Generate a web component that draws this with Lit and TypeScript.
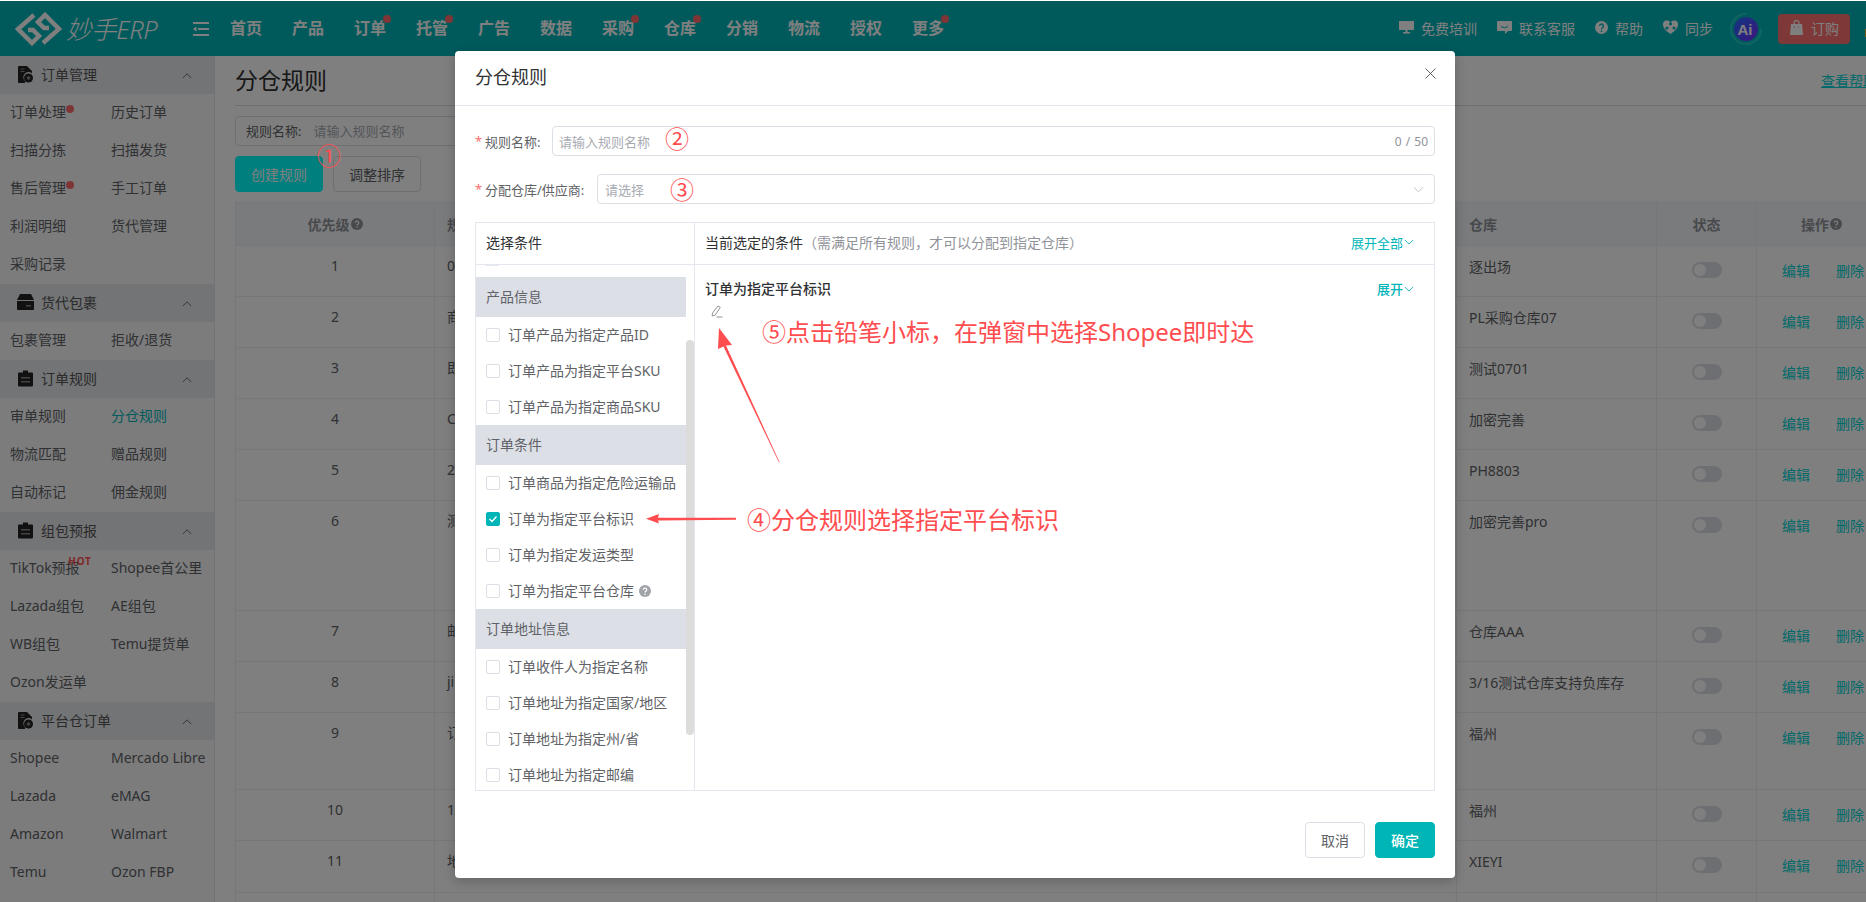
import { LitElement, html, css, svg } from "lit";
import { customElement } from "lit/decorators.js";

const fileGear = html`<svg class="sec-ico" viewBox="0 0 15 17"><path fill="#222" d="M1 0h8l5 5v2.500a5 5 0 0 0-7 7.500V17H1a1 1 0 0 1-1-1V1a1 1 0 0 1 1-1z"/><path fill="#888" d="M2.500 2.500h4v1h-4zM2.500 5h4v1h-4z"/><circle cx="10.500" cy="12" r="4.500" fill="#222"/><circle cx="10.500" cy="12" r="1.800" fill="#888"/></svg>`;
const box = html`<svg class="sec-ico box" viewBox="0 0 17 16"><path fill="#222" d="M3 0h11l3 6H0zM0 7h17v8a1 1 0 0 1-1 1H1a1 1 0 0 1-1-1z"/><path fill="#888" d="M9 11h5v1.500H9z"/></svg>`;
const clip = html`<svg class="sec-ico" viewBox="0 0 15 16"><path fill="#222" d="M5 0h5v2h4a1 1 0 0 1 1 1v12a1 1 0 0 1-1 1H1a1 1 0 0 1-1-1V3a1 1 0 0 1 1-1h4z"/><path fill="#888" d="M3 6.500h9V8H3zM3 10.500h9V12H3z"/></svg>`;

const chevUp = html`<svg class="chev-up" viewBox="0 0 12 8"><path d="M1 7l5-5 5 5" fill="none" stroke="#555" stroke-width="1"/></svg>`;
const chevDown = (c: string) => html`<svg class="chev-dn" viewBox="0 0 12 7"><path d="M1 1l5 5 5-5" fill="none" stroke="${c}" stroke-width="1"/></svg>`;
const qmark = html`<svg class="q" viewBox="0 0 12 12"><circle cx="6" cy="6" r="6" fill="currentColor"/><path d="M4.300 4.700a1.700 1.700 0 1 1 2.600 1.500c-.6.400-.9.700-.9 1.300" fill="none" stroke="#fff" stroke-width="1.200"/><circle cx="6" cy="9.300" r=".8" fill="#fff"/></svg>`;

type Sec = { icon: unknown; title: string; items: [string, string?][]; };
const sections: Sec[] = [
  { icon: fileGear, title: "订单管理", items: [["订单处理*", "历史订单"], ["扫描分拣", "扫描发货"], ["售后管理*", "手工订单"], ["利润明细", "货代管理"], ["采购记录"]] },
  { icon: box, title: "货代包裹", items: [["包裹管理", "拒收/退货"]] },
  { icon: clip, title: "订单规则", items: [["审单规则", "分仓规则"], ["物流匹配", "赠品规则"], ["自动标记", "佣金规则"]] },
  { icon: clip, title: "组包预报", items: [["TikTok预报#", "Shopee首公里"], ["Lazada组包", "AE组包"], ["WB组包", "Temu提货单"], ["Ozon发运单"]] },
  { icon: fileGear, title: "平台仓订单", items: [["Shopee", "Mercado Libre"], ["Lazada", "eMAG"], ["Amazon", "Walmart"], ["Temu", "Ozon FBP"]] },
];

const nav: [string, boolean][] = [["首页", false], ["产品", false], ["订单", true], ["托管", true], ["广告", false], ["数据", false], ["采购", true], ["仓库", true], ["分销", false], ["物流", false], ["授权", false], ["更多", true]];

const rows: [string, string, string, number][] = [
  ["1", "0701规则", "逐出场", 51], ["2", "商品规则", "PL采购仓库07", 51], ["3", "即时规则", "测试0701", 51], ["4", "CN规则", "加密完善", 51],
  ["5", "2024规则", "PH8803", 51], ["6", "测试规则", "加密完善pro", 110], ["7", "邮编规则", "仓库AAA", 51], ["8", "jin规则", "3/16测试仓库支持负库存", 51],
  ["9", "订单规则", "福州", 77], ["10", "1号规则", "福州", 51], ["11", "地址规则", "XIEYI", 52], ["", "", "", 51],
];

const groups: [string, [string, boolean?, boolean?][]][] = [
  ["产品信息", [["订单产品为指定产品ID"], ["订单产品为指定平台SKU"], ["订单产品为指定商品SKU"]]],
  ["订单条件", [["订单商品为指定危险运输品"], ["订单为指定平台标识", true], ["订单为指定发运类型"], ["订单为指定平台仓库", false, true]]],
  ["订单地址信息", [["订单收件人为指定名称"], ["订单地址为指定国家/地区"], ["订单地址为指定州/省"], ["订单地址为指定邮编"]]],
];

@customElement("app-root")
export class AppRoot extends LitElement {
  static styles = css`
    :host { display: block; position: relative; width: 1866px; height: 902px; overflow: hidden; background: #fff;
      font-family: "Noto Sans", "Noto Sans CJK SC", sans-serif; font-size: 14px; color: #606266; }
    * { box-sizing: border-box; }
    .topline { height: 1px; background: #fff; }
    .hdr { height: 55px; background: #00b5b8; color: #fff; display: flex; align-items: center; position: relative; }
    .logo { width: 193px; padding-left: 15px; display: flex; align-items: center; gap: 4px; flex: none; }
    .logo svg { width: 47px; height: 34px; flex: none; }
    .logo span { font-size: 25.500px; font-style: italic; font-weight: 300; letter-spacing: -.4px; white-space: nowrap; line-height: 34px; }
    .burger { width: 16px; height: 14px; flex: none; }
    .nav { display: flex; gap: 30px; margin-left: 21px; font-size: 16px; font-weight: 700; padding-bottom: 4px; }
    .nav span { position: relative; display: block; width: 32px; white-space: nowrap; }
    .dot { position: absolute; width: 8px; height: 8px; border-radius: 50%; background: #ff6b6b; }
    .nav .dot { right: -5px; top: 0; }
    .tools { margin-left: auto; display: flex; align-items: center; margin-right: 16px; }
    .tool { display: flex; align-items: center; gap: 7px; margin-right: 20px; white-space: nowrap; padding-bottom: 2px; }
    .tool svg { width: 15px; height: 15px; flex: none; }
    .ai { width: 32px; height: 32px; margin-right: 16px; flex: none; margin-left: 0; }
    .buy { width: 72px; height: 30px; background: #ff7070; border-radius: 4px; display: flex; align-items: center; gap: 8px; padding: 0 0 2px 12px; }
    .buy svg { width: 13px; height: 15px; }
    .edge { position: absolute; right: 0; top: 28px; width: 1px; height: 8px; background: #ffb020; }

    .page { display: flex; height: 846px; }
    .side { width: 215px; flex: none; background: #f9f9fa; border-right: 1px solid #e4e7ed; overflow: hidden; }
    .sec-h { height: 38px; background: #e6e8eb; display: flex; align-items: center; color: #555; position: relative; padding: 0 0 2px 18px; }
    .sec-ico { width: 15px; height: 17px; flex: none; margin-right: 8px; }
    .sec-ico.box { width: 17px; height: 16px; margin-left: -1px; margin-right: 7px; }
    .chev-up { width: 10px; height: 7px; margin-left: auto; margin-right: 22px; margin-top: 2px; }
    .side-row { height: 38px; display: grid; grid-template-columns: 101px 1fr; padding: 0 0 4px 10px; align-items: center; color: #606266; }
    .side-row div { white-space: nowrap; position: relative; }
    .side-row .active { color: #00b5b8; }
    .inl { position: relative; display: inline-block; }
    .inl .dot { right: -8px; top: 4px; }
    .hot { position: absolute; right: -12px; top: -1px; color: #ff5050; font-size: 10px; font-weight: 700; letter-spacing: .8px; line-height: 10px; }

    .main { flex: 1; padding-left: 20px; overflow: hidden; }
    .inner { width: 1651px; }
    .title { height: 50px; border-bottom: 1px solid #dcdfe6; display: flex; justify-content: space-between; align-items: center; padding: 0 9px 2px 0; }
    .title h1 { margin: 0; font-size: 23px; font-weight: 400; color: #303133; line-height: 30px; }
    .title a { color: #00d4d4; text-decoration: underline; white-space: nowrap; }
    .search { margin-top: 10px; height: 30px; width: 500px; border: 1px solid #dcdfe6; border-radius: 4px; display: flex; align-items: center; padding: 0 0 1px 10px; gap: 12px; font-size: 13px; }
    .search i { font-style: normal; color: #a8abb2; }
    .btns { display: flex; gap: 10px; margin-top: 10px; }
    .btn { width: 88px; height: 36px; border-radius: 4px; border: 1px solid #dcdfe6; display: flex; align-items: center; justify-content: center; }
    .btn.pri { background: #00ffff; color: #fff; border-color: #00ffff; }
    .tbl { margin-top: 10px; display: grid; grid-template-columns: 199px 1022px 200px 100px 130px; border-top: 1px solid #ebeef5; border-left: 1px solid #ebeef5; }
    .th { height: 43px; background: #f5f7fa; font-weight: 700; color: #909399; display: flex; align-items: center; justify-content: center; gap: 1px; border-right: 1px solid #ebeef5; border-bottom: 1px solid #ebeef5; padding-bottom: 1px; }
    .th.l { justify-content: flex-start; padding-left: 12px; }
    .q { width: 12px; height: 12px; flex: none; }
    .td { border-right: 1px solid #ebeef5; border-bottom: 1px solid #ebeef5; padding-top: 10px; line-height: 20px; color: #606266; white-space: nowrap; overflow: hidden; }
    .td.c { text-align: center; }
    .td.l { padding-left: 12px; }
    .td.wh { padding-top: 11px; }
    .sw { margin: 6px auto 0; width: 30px; height: 16px; border-radius: 8px; background: #dcdfe6; padding: 2px; }
    .sw b { display: block; width: 12px; height: 12px; border-radius: 50%; background: #fff; }
    .ops { display: flex; gap: 26px; padding: 5px 0 0 25px; color: #00d4d4; }

    .mask { position: absolute; inset: 1px 0 0 0; background: rgba(0,0,0,.5); }
    .dlg { position: absolute; left: 455px; top: 51px; width: 1000px; height: 827px; background: #fff; border-radius: 4px; box-shadow: 0 3px 12px rgba(0,0,0,.22); display: flex; flex-direction: column; }
    .dlg-h { height: 55px; flex: none; border-bottom: 1px solid #e4e7ed; display: flex; align-items: center; justify-content: space-between; padding: 0 19px 4px 20px; font-size: 18px; color: #303133; }
    .dlg-h svg { width: 11px; height: 11px; margin-top: -6px; }
    .dlg-b { padding: 20px 20px 0 20px; flex: 1; display: flex; flex-direction: column; gap: 18px; }
    .frow { display: flex; align-items: center; height: 30px; font-size: 13px; }
    .lab { flex: none; white-space: nowrap; display: flex; }
    .lab i { font-style: normal; color: #f56c6c; width: 10px; }
    .inp { flex: 1; height: 30px; border: 1px solid #dcdfe6; border-radius: 4px; display: flex; align-items: center; justify-content: space-between; padding: 0 6px; color: #a8abb2; }
    .inp .ph { color: #a8abb2; }
    .inp small { font-size: 12px; color: #909399; word-spacing: 1px; }
    .inp .chev-dn { width: 11px; height: 7px; margin-right: 4px; }
    .panel { height: 569px; border: 1px solid #e4e7ed; display: grid; grid-template-columns: 219px 1fr; }
    .left { border-right: 1px solid #e4e7ed; display: flex; flex-direction: column; min-height: 0; }
    .p-h { height: 42px; flex: none; border-bottom: 1px solid #e4e7ed; display: flex; align-items: center; color: #303133; padding: 0 0 3px 10px; }
    .list { position: relative; flex: 1; overflow: hidden; }
    .peek { width: 13px; height: 1px; background: #e4e7ed; margin: 0 0 11px 10px; }
    .grp { width: 210px; height: 40px; background: #dcdfe6; display: flex; align-items: center; padding: 0 0 2px 10px; color: #606266; }
    .it { height: 36px; display: flex; align-items: center; padding-left: 10px; white-space: nowrap; }
    .it span.t { padding-bottom: 2px; }
    .cb { width: 14px; height: 14px; border: 1px solid #dcdfe6; border-radius: 2px; margin-right: 8px; flex: none; background: #fff; }
    .cb.on { background: #00b5b8; border-color: #00b5b8; display: flex; }
    .cb svg { width: 12px; height: 12px; }
    .it .q { color: #a0a3a8; margin-left: 5px; }
    .bar { position: absolute; right: 0; top: 75px; width: 8px; height: 395px; background: #dcdcdc; border-radius: 4px; }
    .right { display: flex; flex-direction: column; min-height: 0; }
    .right .p-h { padding-right: 20px; justify-content: space-between; }
    .right .p-h em { font-style: normal; color: #909399; }
    .tog { color: #00b5b8; font-size: 13px; display: flex; align-items: center; gap: 1px; white-space: nowrap; }
    .chev-dn { width: 10px; height: 6px; }
    .cond { padding: 13px 20px 0 10px; }
    .cond-h { display: flex; justify-content: space-between; align-items: center; font-weight: 500; color: #303133; font-size: 14px; line-height: 22px; }
    .cond svg.pen { display: block; width: 13px; height: 13px; margin: 5px 0 0 5px; }
    .dlg-f { display: flex; justify-content: flex-end; gap: 10px; padding: 0 20px 20px; flex: none; }
    .dbtn { width: 60px; height: 36px; border-radius: 4px; border: 1px solid #dcdfe6; display: flex; align-items: center; justify-content: center; font-size: 14px; padding-bottom: 1px; }
    .dbtn.ok { background: #00b5b5; color: #fff; border-color: #00b5b5; font-weight: 500; }

    .note { position: absolute; color: #ff4d4f; line-height: 1; white-space: nowrap; font-family: "Noto Sans", "Noto Sans CJK SC", sans-serif; font-size: 24px; }
    .note.num { font-family: "Noto Sans CJK SC", sans-serif; }
    .arrows { position: absolute; inset: 0; width: 1866px; height: 902px; pointer-events: none; }
  `;

  private sideCell(t: string | undefined, active: boolean) {
    if (!t) return html`<div></div>`;
    const mark = t.endsWith("*") ? "dot" : t.endsWith("#") ? "hot" : "";
    const label = mark ? t.slice(0, -1) : t;
    return html`<div class=${active ? "active" : ""}><span class="inl">${label}${mark === "dot" ? html`<span class="dot"></span>` : ""}${mark === "hot" ? html`<span class="hot">HOT</span>` : ""}</span></div>`;
  }

  private renderHeader() {
    return html`<div class="topline"></div>
    <div class="hdr">
      <div class="logo">
        <svg viewBox="0 0 47 34"><g fill="none" stroke="#fff" stroke-width="4.500"><path d="M19 3 L3 17 L17 31 L24 24 L18 18 L13 18"/><path d="M28 31 L44 17 L30 3 L23 10 L29 16 L34 16"/></g></svg>
        <span>妙手ERP</span>
      </div>
      <svg class="burger" viewBox="0 0 16 14"><path fill="#fff" d="M0 0h16v2H0zM5 6h11v2H5zM0 12h16v2H0zM0 7l3.500-2.500v5z"/></svg>
      <div class="nav">${nav.map(([t, d]) => html`<span>${t}${d ? html`<i class="dot"></i>` : ""}</span>`)}</div>
      <div class="tools">
        <div class="tool"><svg viewBox="0 0 15 15"><path fill="#fff" d="M0 1h15v9H8.500v2H11v1.500H4V12h2.500v-2H0zM2 4h6v1.200H2z"/></svg>免费培训</div>
        <div class="tool"><svg viewBox="0 0 15 15"><path fill="#fff" d="M1 1h13a1 1 0 0 1 1 1v8a1 1 0 0 1-1 1h-3l-3 3v-3H1a1 1 0 0 1-1-1V2a1 1 0 0 1 1-1z"/><path d="M4 6.500q3.500 2.500 7 0" stroke="#00b5b8" fill="none"/></svg>联系客服</div>
        <div class="tool"><svg viewBox="0 0 12 12" style="width:13px;height:13px">${svg`<circle cx="6" cy="6" r="6" fill="#fff"/><path d="M4.200 4.700a1.800 1.800 0 1 1 2.700 1.500c-.6.400-.9.700-.9 1.300" fill="none" stroke="#00b5b8" stroke-width="1.300"/><circle cx="6" cy="9.300" r=".8" fill="#00b5b8"/>`}</svg>帮助</div>
        <div class="tool" style="margin-right:17px"><svg viewBox="0 0 15 15"><path fill="#fff" d="M7.500 14C3 11 0 8 0 4.500A4 4 0 0 1 7.500 2.500 4 4 0 0 1 15 4.500C15 8 12 11 7.500 14z"/><circle cx="7.500" cy="3.800" r="1.600" fill="#00b5b8"/><circle cx="4" cy="8" r="1.600" fill="#00b5b8"/><circle cx="11" cy="8" r="1.600" fill="#00b5b8"/></svg>同步</div>
        <svg class="ai" viewBox="0 0 32 32"><defs><linearGradient id="aig" x1="0" y1="0" x2="1" y2="1"><stop offset="0" stop-color="#1f6fff"/><stop offset="1" stop-color="#7a2bff"/></linearGradient></defs><circle cx="16" cy="16" r="15" fill="none" stroke="#2fd0c8" stroke-width="2" stroke-dasharray="70 24" opacity=".75"/><circle cx="16" cy="16" r="12" fill="url(#aig)"/><text x="15" y="21.500" text-anchor="middle" font-size="15" font-weight="700" fill="#fff" font-family="Liberation Sans">Ai</text></svg>
        <div class="buy"><svg viewBox="0 0 13 15"><path fill="#fff" d="M1 4h11l1 11H0z"/><path d="M4 6V3a2.500 2.500 0 0 1 5 0v3" fill="none" stroke="#fff" stroke-width="1.200"/><path d="M3.800 6.500h1.200v1H3.800zM8 6.500h1.200v1H8z" fill="#ff7070"/></svg>订购</div>
      </div>
      <span class="edge"></span>
    </div>`;
  }

  private renderSide() {
    return html`<aside class="side">
      ${sections.map((s) => html`
        <div class="sec-h">${s.icon}${s.title}${chevUp}</div>
        ${s.items.map(([a, b]) => html`<div class="side-row">${this.sideCell(a, false)}${this.sideCell(b, b === "分仓规则")}</div>`)}
      `)}
    </aside>`;
  }

  private renderMain() {
    return html`<main class="main"><div class="inner">
      <div class="title"><h1>分仓规则</h1><a>查看帮助</a></div>
      <div class="search"><span>规则名称:</span><i>请输入规则名称</i></div>
      <div class="btns"><div class="btn pri">创建规则</div><div class="btn">调整排序</div></div>
      <div class="tbl">
        <div class="th">优先级${qmark}</div><div class="th l">规则名称</div><div class="th l">仓库</div><div class="th">状态</div><div class="th">操作${qmark}</div>
        ${rows.map(([n, name, wh, h]) => html`
          <div class="td c" style="height:${h}px">${n}</div>
          <div class="td l" style="height:${h}px">${name}</div>
          <div class="td l wh" style="height:${h}px">${wh}</div>
          <div class="td" style="height:${h}px">${n ? html`<div class="sw"><b></b></div>` : ""}</div>
          <div class="td" style="height:${h}px">${n ? html`<div class="ops"><span>编辑</span><span>删除</span></div>` : ""}</div>
        `)}
      </div>
    </div></main>`;
  }

  private renderDialog() {
    return html`<div class="dlg">
      <div class="dlg-h">分仓规则<svg viewBox="0 0 11 11"><path d="M.5.500l10 10M10.500.500l-10 10" stroke="#606266" stroke-width="1" fill="none"/></svg></div>
      <div class="dlg-b">
        <div class="frow"><div class="lab" style="width:77px"><i>*</i>规则名称:</div><div class="inp"><span class="ph">请输入规则名称</span><small>0 / 50</small></div></div>
        <div class="frow"><div class="lab" style="width:122px"><i>*</i>分配仓库/供应商:</div><div class="inp" style="padding-left:7px"><span class="ph">请选择</span>${chevDown("#b8bcc4")}</div></div>
        <div class="panel">
          <div class="left">
            <div class="p-h">选择条件</div>
            <div class="list">
              <div class="peek"></div>
              ${groups.map(([g, items]) => html`<div class="grp">${g}</div>
                ${items.map(([t, on, help]) => html`<div class="it"><span class="cb ${on ? "on" : ""}">${on ? html`<svg viewBox="0 0 12 12"><path d="M2.500 6l2.500 2.500 4.500-5" fill="none" stroke="#fff" stroke-width="1.300"/></svg>` : ""}</span><span class="t">${t}</span>${help ? qmark : ""}</div>`)}`)}
              <div class="bar"></div>
            </div>
          </div>
          <div class="right">
            <div class="p-h"><span>当前选定的条件<em>（需满足所有规则，才可以分配到指定仓库）</em></span><span class="tog">展开全部${chevDown("#00b5b8")}</span></div>
            <div class="cond">
              <div class="cond-h"><span>订单为指定平台标识</span><span class="tog">展开${chevDown("#00b5b8")}</span></div>
              <svg class="pen" viewBox="0 0 13 13"><path d="M8 1l2.300 1.500L5 10.200 2.200 11 2.500 8z" fill="none" stroke="#888" stroke-width=".9"/><path d="M6.500 12h6" stroke="#888" stroke-width=".9"/></svg>
            </div>
          </div>
        </div>
      </div>
      <div class="dlg-f"><div class="dbtn">取消</div><div class="dbtn ok">确定</div></div>
    </div>`;
  }

  render() {
    return html`
      ${this.renderHeader()}
      <div class="page">${this.renderSide()}${this.renderMain()}</div>
      <div class="mask"></div>
      ${this.renderDialog()}
      <div class="note num" style="left:317px;top:143px">①</div>
      <div class="note num" style="left:665px;top:126px">②</div>
      <div class="note num" style="left:670px;top:177px">③</div>
      <div class="note" style="left:762px;top:320px">⑤点击铅笔小标，在弹窗中选择Shopee即时达</div>
      <div class="note" style="left:747px;top:508px">④分仓规则选择指定平台标识</div>
      <svg class="arrows" viewBox="0 0 1866 902">
        <polygon fill="#ff4d4f" points="719,328 732,345 726,345.500 779.500,462 779,462.500 723.500,346.500 718,349"/>
        <polygon fill="#ff4d4f" points="646,518.700 659,514 658,517.700 736,517.800 736,519.800 658,520.500 659,523.500"/>
      </svg>
    `;
  }
}
